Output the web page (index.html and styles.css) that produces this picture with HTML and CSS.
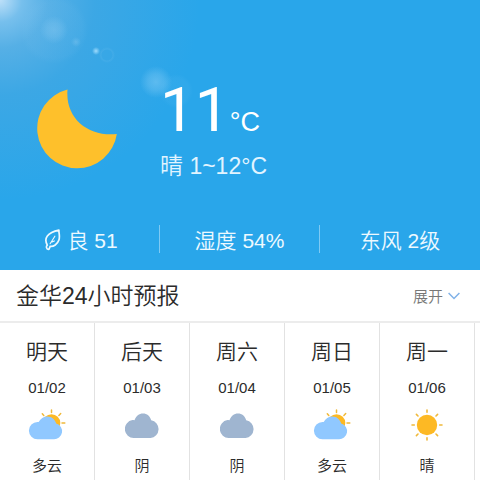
FILE: index.html
```
<!DOCTYPE html>
<html lang="zh-CN">
<head>
<meta charset="utf-8">
<meta name="viewport" content="width=device-width, initial-scale=1">
<title>金华天气</title>
<link rel="stylesheet" href="styles.css">
</head>
<body>
<svg class="defs" width="0" height="0" aria-hidden="true">
  <defs>
    <symbol id="cloud" viewBox="0 0 34 25">
      <path d="M9 25A9 9 0 0 1 7.500 7.100Q8.700 7 9.500 7.200C11 3 14 .5 18 .5C22 .5 25 3 26.200 7.200A9 9 0 0 1 25.500 25Z"/>
    </symbol>
    <symbol id="partly" viewBox="0 0 38 32">
      <g stroke="#f0b93a" stroke-width="1.500" stroke-linecap="round"><path d="M23.500 1v2.500M14.300 4.800l1.500 1.700M32.700 4.600l-1.800 1.900M34 14h2.800"/></g>
      <circle cx="23.500" cy="14" r="8.800" fill="#fdb924"/>
      <path fill="#90c8ff" d="M9.500 30.200A8.600 8.600 0 0 1 9.500 13Q10.200 13 10.700 13.100C12.500 9.500 15.500 7.500 19.500 7.500C23.500 7.500 27 10.300 28.200 14.500A8 8 0 0 1 25.500 30.200Z"/>
    </symbol>
    <symbol id="sun" viewBox="0 0 32 32">
      <circle cx="16" cy="16" r="10.200" fill="#fdb924"/>
      <g stroke="#f0b93a" stroke-width="1.600" stroke-linecap="round"><path d="M16 1v2.300M16 28.700V31M1 16h2.300M28.700 16H31M5.400 5.400L7 7M25 25l1.600 1.600M5.400 26.600L7 25M25 7l1.600-1.600"/></g>
    </symbol>
  </defs>
</svg>
<main>
  <section class="hero">
    <div class="now">
      <svg class="moon" viewBox="0 0 82 80" role="img" aria-label="晴"><path fill="#fec02b" d="M31.500.5A40 40 0 1 0 80.800 45C53 48 29 30 31.500.5Z"/></svg>
      <div class="reading">
        <p class="temp">11<span class="unit">°C</span></p>
        <p class="range">晴 1~12°C</p>
      </div>
    </div>
    <ul class="stats">
      <li><svg class="leaf" viewBox="0 0 18 24" fill="none" stroke="currentColor" stroke-width="1.800" stroke-linecap="round" stroke-linejoin="round" aria-hidden="true"><path d="M3.500 18C-.5 11 3.500 4.500 15.800 2C15.500 5 17.200 8 15.800 12.500C14.300 17 10 19.800 6.500 19.200M3.500 18C2 19 2.500 22.500 4.500 22.500C6 22.500 6 20.500 6.500 19.200"/><path stroke-width="1.200" d="M6.500 16.500L11.500 8.500M8.500 14.500l2.500-1"/></svg>良 51</li>
      <li>湿度 54%</li>
      <li>东风 2级</li>
    </ul>
  </section>
  <header class="bar">
    <h1>金华24小时预报</h1>
    <button class="expand" type="button">展开<svg class="chevron" viewBox="0 0 12 8" fill="none" stroke="#80b2e8" stroke-width="1.500" aria-hidden="true"><path d="M.6 1L6 6.500L11.400 1"/></svg></button>
  </header>
  <ol class="days">
    <li><h2>明天</h2><time>01/02</time><svg class="icon partly" aria-hidden="true"><use href="#partly"/></svg><span>多云</span></li>
    <li><h2>后天</h2><time>01/03</time><svg class="icon cloud" aria-hidden="true"><use href="#cloud"/></svg><span>阴</span></li>
    <li><h2>周六</h2><time>01/04</time><svg class="icon cloud" aria-hidden="true"><use href="#cloud"/></svg><span>阴</span></li>
    <li><h2>周日</h2><time>01/05</time><svg class="icon partly" aria-hidden="true"><use href="#partly"/></svg><span>多云</span></li>
    <li><h2>周一</h2><time>01/06</time><svg class="icon sun" aria-hidden="true"><use href="#sun"/></svg><span>晴</span></li>
  </ol>
</main>
</body>
</html>
```
FILE: styles.css
```
* { box-sizing: border-box; margin: 0; padding: 0; }
body {
  font-family: "Liberation Sans", "Noto Sans CJK SC", sans-serif;
  font-weight: 350;
  color: #2b2b2b;
  background: #fff;
  overflow-x: hidden;
}
.defs { position: absolute; }
ul, ol { list-style: none; }
h1, h2 { font-weight: 350; }

.hero {
  padding-top: 72px;
  color: #fff;
  background:
    radial-gradient(circle at 54px 30px, rgba(160, 212, 245, .3) 0, rgba(160, 212, 245, .2) 7px, transparent 14px),
    radial-gradient(circle at 54px 30px, rgba(160, 212, 245, .05) 0 28px, transparent 34px),
    radial-gradient(circle at 76px 42px, rgba(160, 212, 245, .3) 0, transparent 5px),
    radial-gradient(circle at 96px 51px, rgba(170, 225, 255, .9) 0, transparent 4px),
    radial-gradient(circle at 107px 55px, transparent 0 5px, rgba(160, 212, 245, .1) 6px, transparent 8px),
    radial-gradient(circle at 156px 82px, rgba(140, 207, 246, .5) 0, rgba(140, 207, 246, .32) 8px, transparent 16px),
    radial-gradient(circle at 176px 91px, rgba(140, 207, 246, .07) 0 13px, transparent 17px),
    radial-gradient(circle at 0 0, rgba(205, 230, 250, .9) 0, rgba(160, 205, 238, .65) 22px, rgba(130, 185, 225, .5) 48px, rgba(100, 170, 218, .32) 95px, transparent 200px),
    #29a6ea;
}
.now { display: flex; padding-left: 36px; gap: 42px; }
.moon { width: 82px; height: 80px; margin-top: 17px; flex: none; }
.temp { font-family: Roboto, "Liberation Sans", sans-serif; font-weight: 400; font-size: 62px; line-height: 76px; }
.unit { font-family: "Liberation Sans", sans-serif; font-size: 27px; line-height: 1; }
.range { font-size: 23px; line-height: 32px; margin-top: 2px; color: #e2f4ff; }
.stats { display: grid; grid-template-columns: repeat(3, 1fr); padding: 43px 0 17px; }
.stats li {
  display: flex;
  align-items: center;
  justify-content: center;
  height: 28px;
  font-size: 21px;
  white-space: pre;
  color: #edf9ff;
  border-right: 1px solid #7fcaf4;
}
.stats li:last-child { border-right: 0; }
.leaf { width: 17px; height: 23px; margin: 0 6px 0 3px; }

.bar {
  display: flex;
  align-items: center;
  justify-content: space-between;
  height: 53px;
  padding: 0 20px 0 16px;
  border-bottom: 2px solid #ececec;
}
.bar h1 { font-size: 23px; line-height: 32px; }
.expand {
  display: flex;
  align-items: center;
  gap: 5px;
  border: 0;
  background: none;
  font: inherit;
  font-size: 15px;
  color: #777;
}
.chevron { width: 12px; height: 8px; }

.days { display: flex; overflow: hidden; }
.days li {
  flex: 0 0 95px;
  display: flex;
  flex-direction: column;
  align-items: center;
  height: 157px;
  padding-top: 14px;
  border-right: 1px solid #e2e2e2;
}
.days h2 { font-size: 21px; line-height: 30px; }
.days time { font-size: 15px; line-height: 20px; margin-top: 11px; }
.days span { font-size: 15px; line-height: 20px; }
.icon { width: 38px; height: 32px; margin: 11px 0 15px; }
.cloud { width: 34px; height: 25px; margin: 15px 0 18px; fill: #9fb5d0; }
.sun { width: 32px; }
```
